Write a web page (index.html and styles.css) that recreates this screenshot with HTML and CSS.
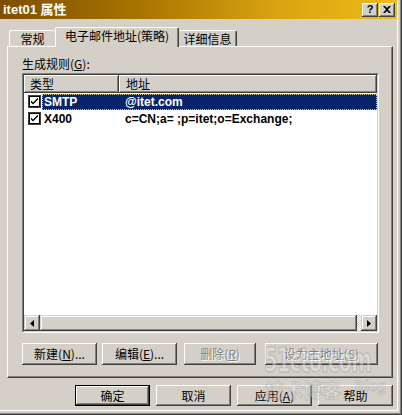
FILE: index.html
```html
<!DOCTYPE html>
<html>
<head>
<meta charset="utf-8">
<link rel="stylesheet" href="styles.css">
</head>
<body>
<div class="window">
  <div class="titlebar">
    <span class="title">itet01 属性</span>
    <div class="tbtns">
      <div class="tbtn"><span class="q">?</span></div>
      <div class="tbtn"><svg width="8" height="7" viewBox="0 0 8 7"><path d="M0 0h2l2 2 2-2h2L5 3.5 8 7H6L4 5 2 7H0l3-3.5z" fill="#000"/></svg></div>
    </div>
  </div>

  <div class="tabs">
    <div class="tab t1">常规</div>
    <div class="tab active">电子邮件地址(策略)</div>
    <div class="tab t3">详细信息</div>
  </div>

  <div class="panel">
    <div class="label">生成规则(<u>G</u>):</div>
    <div class="list">
      <div class="list-inner">
        <div class="header">
          <div class="hcol c1">类型</div>
          <div class="hcol c2">地址</div>
        </div>
        <div class="row">
          <span class="chk"><svg width="13" height="13" viewBox="0 0 13 13"><rect x="0" y="0" width="13" height="13" fill="#404040"/><rect x="1" y="1" width="11" height="11" fill="#000"/><rect x="2" y="2" width="9" height="9" fill="#fff"/><path d="M3 5.5l2 2 5-5v2l-5 5-2-2z" fill="#000"/></svg></span>
          <div class="cells sel">
            <span class="name">SMTP</span>
            <span class="addr">@itet.com</span>
          </div>
        </div>
        <div class="row">
          <span class="chk"><svg width="13" height="13" viewBox="0 0 13 13"><rect x="0" y="0" width="13" height="13" fill="#404040"/><rect x="1" y="1" width="11" height="11" fill="#000"/><rect x="2" y="2" width="9" height="9" fill="#fff"/><path d="M3 5.5l2 2 5-5v2l-5 5-2-2z" fill="#000"/></svg></span>
          <div class="cells">
            <span class="name">X400</span>
            <span class="addr">c=CN;a= ;p=itet;o=Exchange;</span>
          </div>
        </div>
        <div class="spacer"></div>
        <div class="hscroll">
          <div class="sbtn"><svg width="4" height="7" viewBox="0 0 4 7"><path d="M4 0v7L0 3.5z" fill="#000"/></svg></div>
          <div class="thumb"></div>
          <div class="track"></div>
          <div class="sbtn"><svg width="4" height="7" viewBox="0 0 4 7"><path d="M0 0v7l4-3.5z" fill="#000"/></svg></div>
        </div>
      </div>
    </div>
    <div class="actions">
      <div class="btn b-new">新建(<u>N</u>)...</div>
      <div class="btn b-edit">编辑(<u>E</u>)...</div>
      <div class="btn b-del disabled">删除(<u>R</u>)</div>
      <div class="btn b-main disabled">设为主地址(<u>S</u>)</div>
    </div>
  </div>

  <div class="footer">
    <div class="btn default"><div class="inner">确定</div></div>
    <div class="btn">取消</div>
    <div class="btn">应用(<u>A</u>)</div>
    <div class="btn">帮助</div>
  </div>

  <div class="wm wm1">51cto.com</div>
  <div class="wm wm2">技术博客</div>
  <div class="wm wm3">Blog</div>
</div>
</body>
</html>
```

FILE: styles.css
```css
* { box-sizing: border-box; }
html, body { margin: 0; padding: 0; }
body {
  background: #d4d0c8;
  font-family: "Noto Sans CJK SC", sans-serif;
  font-size: 12px;
  color: #000;
}
u { text-decoration: underline; text-underline-offset: 1px; }

.window {
  position: relative;
  width: 402px;
  height: 415px;
  background: #d4d0c8;
  padding-right: 5px;
  box-shadow: inset -1px -1px #404040, inset -2px -2px #808080, inset -4px -4px #d4d0c8, inset -5px -5px #ffffff;
  overflow: hidden;
}

.titlebar {
  height: 19px;
  display: flex;
  align-items: center;
  justify-content: space-between;
  padding: 0 2px 0 3px;
  background: linear-gradient(90deg, #7e4e00 0%, #a87400 35%, #d8a410 70%, #ecbc18 100%);
}
.title {
  color: #fff;
  font-weight: bold;
  font-size: 13px;
  line-height: 19px;
  font-family: "Liberation Sans", "Noto Sans CJK SC", sans-serif;
}
.tbtns { display: flex; gap: 1px; }
.tbtn {
  width: 16px;
  height: 14px;
  background: #d4d0c8;
  box-shadow: inset -1px -1px #404040, inset 1px 1px #fff, inset -2px -2px #808080;
  display: flex;
  align-items: center;
  justify-content: center;
}
.tbtn .q {
  font-family: "Liberation Sans", sans-serif;
  font-weight: bold;
  font-size: 11px;
  line-height: 11px;
}

.tabs {
  display: flex;
  align-items: flex-end;
  height: 20px;
  margin-top: 8px;
  padding-left: 9px;
  position: relative;
  z-index: 1;
  margin-bottom: -1px;
}
.tab {
  height: 16px;
  margin-bottom: 1px;
  border-top: 1px solid #fff;
  border-left: 1px solid #fff;
  border-right: 1px solid #404040;
  border-radius: 2px 2px 0 0;
  box-shadow: inset -1px 0 #808080;
  background: #d4d0c8;
  display: flex;
  align-items: center;
  justify-content: center;
  line-height: 14px;
}
.t1 { width: 46px; border-right: none; box-shadow: none; }
.active {
  width: 124px;
  height: 20px;
  margin-bottom: 0;
  padding-bottom: 3px;
}
.t3 { width: 58px; border-left: none; }

.panel {
  margin-left: 7px;
  width: 386px;
  height: 332px;
  border: 1px solid;
  border-color: #fff #404040 #404040 #fff;
  box-shadow: inset -1px -1px #808080;
  padding: 9px 0 0 14px;
}
.label {
  height: 16px;
  line-height: 16px;
  margin-bottom: 1px;
}

.list {
  width: 357px;
  height: 260px;
  border: 1px solid;
  border-color: #808080 #fff #fff #808080;
}
.list-inner {
  height: 100%;
  border: 1px solid;
  border-color: #404040 #d4d0c8 #d4d0c8 #404040;
  background: #fff;
  display: flex;
  flex-direction: column;
}
.header { display: flex; height: 18px; flex: none; }
.hcol {
  background: #d4d0c8;
  box-shadow: inset -1px -1px #404040, inset 1px 1px #fff, inset -2px -2px #808080;
  line-height: 17px;
}
.c1 { width: 95px; padding-left: 6px; }
.c2 { flex: 1; padding-left: 7px; }

.row {
  display: flex;
  align-items: center;
  height: 17px;
  flex: none;
  font-family: "Liberation Sans", sans-serif;
  font-weight: bold;
  font-size: 12px;
}
.chk { width: 13px; height: 13px; margin-left: 4px; margin-right: 1px; display: block; }
.chk svg { display: block; }
.cells {
  flex: 1;
  display: flex;
  align-items: center;
  height: 16px;
  border: 1px solid transparent;
}
.sel {
  background: #0a246a;
  color: #fff;
  border: 1px dotted #d8c890;
}
.name { width: 76px; padding-left: 1px; }
.addr { padding-left: 6px; }

.spacer { flex: 1; }
.hscroll { display: flex; height: 16px; flex: none; }
.sbtn {
  width: 16px;
  height: 16px;
  background: #d4d0c8;
  box-shadow: inset -1px -1px #404040, inset 1px 1px #d4d0c8, inset -2px -2px #808080, inset 2px 2px #fff;
  display: flex;
  align-items: center;
  justify-content: center;
}
.thumb {
  flex: 1;
  background: #d4d0c8;
  box-shadow: inset -1px -1px #404040, inset 1px 1px #d4d0c8, inset -2px -2px #808080, inset 2px 2px #fff;
}
.track {
  width: 4px;
  background: repeating-conic-gradient(#fff 0 25%, #d4d0c8 0 50%) 0 0 / 2px 2px;
}

.actions {
  display: flex;
  margin-top: 10px;
}
.btn {
  height: 22px;
  width: 75px;
  background: #d4d0c8;
  box-shadow: inset -1px -1px #404040, inset 1px 1px #fff, inset -2px -2px #808080;
  display: flex;
  align-items: center;
  justify-content: center;
  line-height: 14px;
}
.b-edit { margin-left: 5px; }
.b-del { margin-left: 7px; width: 72px; }
.b-main { margin-left: 9px; width: 113px; }
.disabled { color: #808080; text-shadow: 1px 1px 0 #fff; }

.footer {
  display: flex;
  gap: 6px;
  margin-top: 7px;
  padding-left: 75px;
}
.footer .btn { height: 21px; }
.default {
  border: 1px solid #000;
  box-shadow: none;
  padding: 0;
}
.default .inner {
  width: 100%;
  height: 100%;
  display: flex;
  align-items: center;
  justify-content: center;
  box-shadow: inset -1px -1px #404040, inset 1px 1px #fff, inset -2px -2px #808080;
}

.wm {
  position: absolute;
  color: rgba(235, 235, 235, 0.4);
  -webkit-text-stroke: 1px rgba(130, 130, 130, 0.3);
  font-weight: bold;
  pointer-events: none;
  z-index: 5;
  line-height: 1;
  transform-origin: 0 0;
}
.wm1 {
  left: 264px;
  top: 345px;
  font-family: "DejaVu Sans Condensed", "DejaVu Sans", sans-serif;
  font-size: 22px;
  letter-spacing: -1px;
  transform: scaleY(1.5);
}
.wm2 {
  left: 265px;
  top: 380px;
  font-size: 19px;
}
.wm3 {
  left: 355px;
  top: 379px;
  font-family: "Liberation Sans", sans-serif;
  font-size: 14px;
}
```
